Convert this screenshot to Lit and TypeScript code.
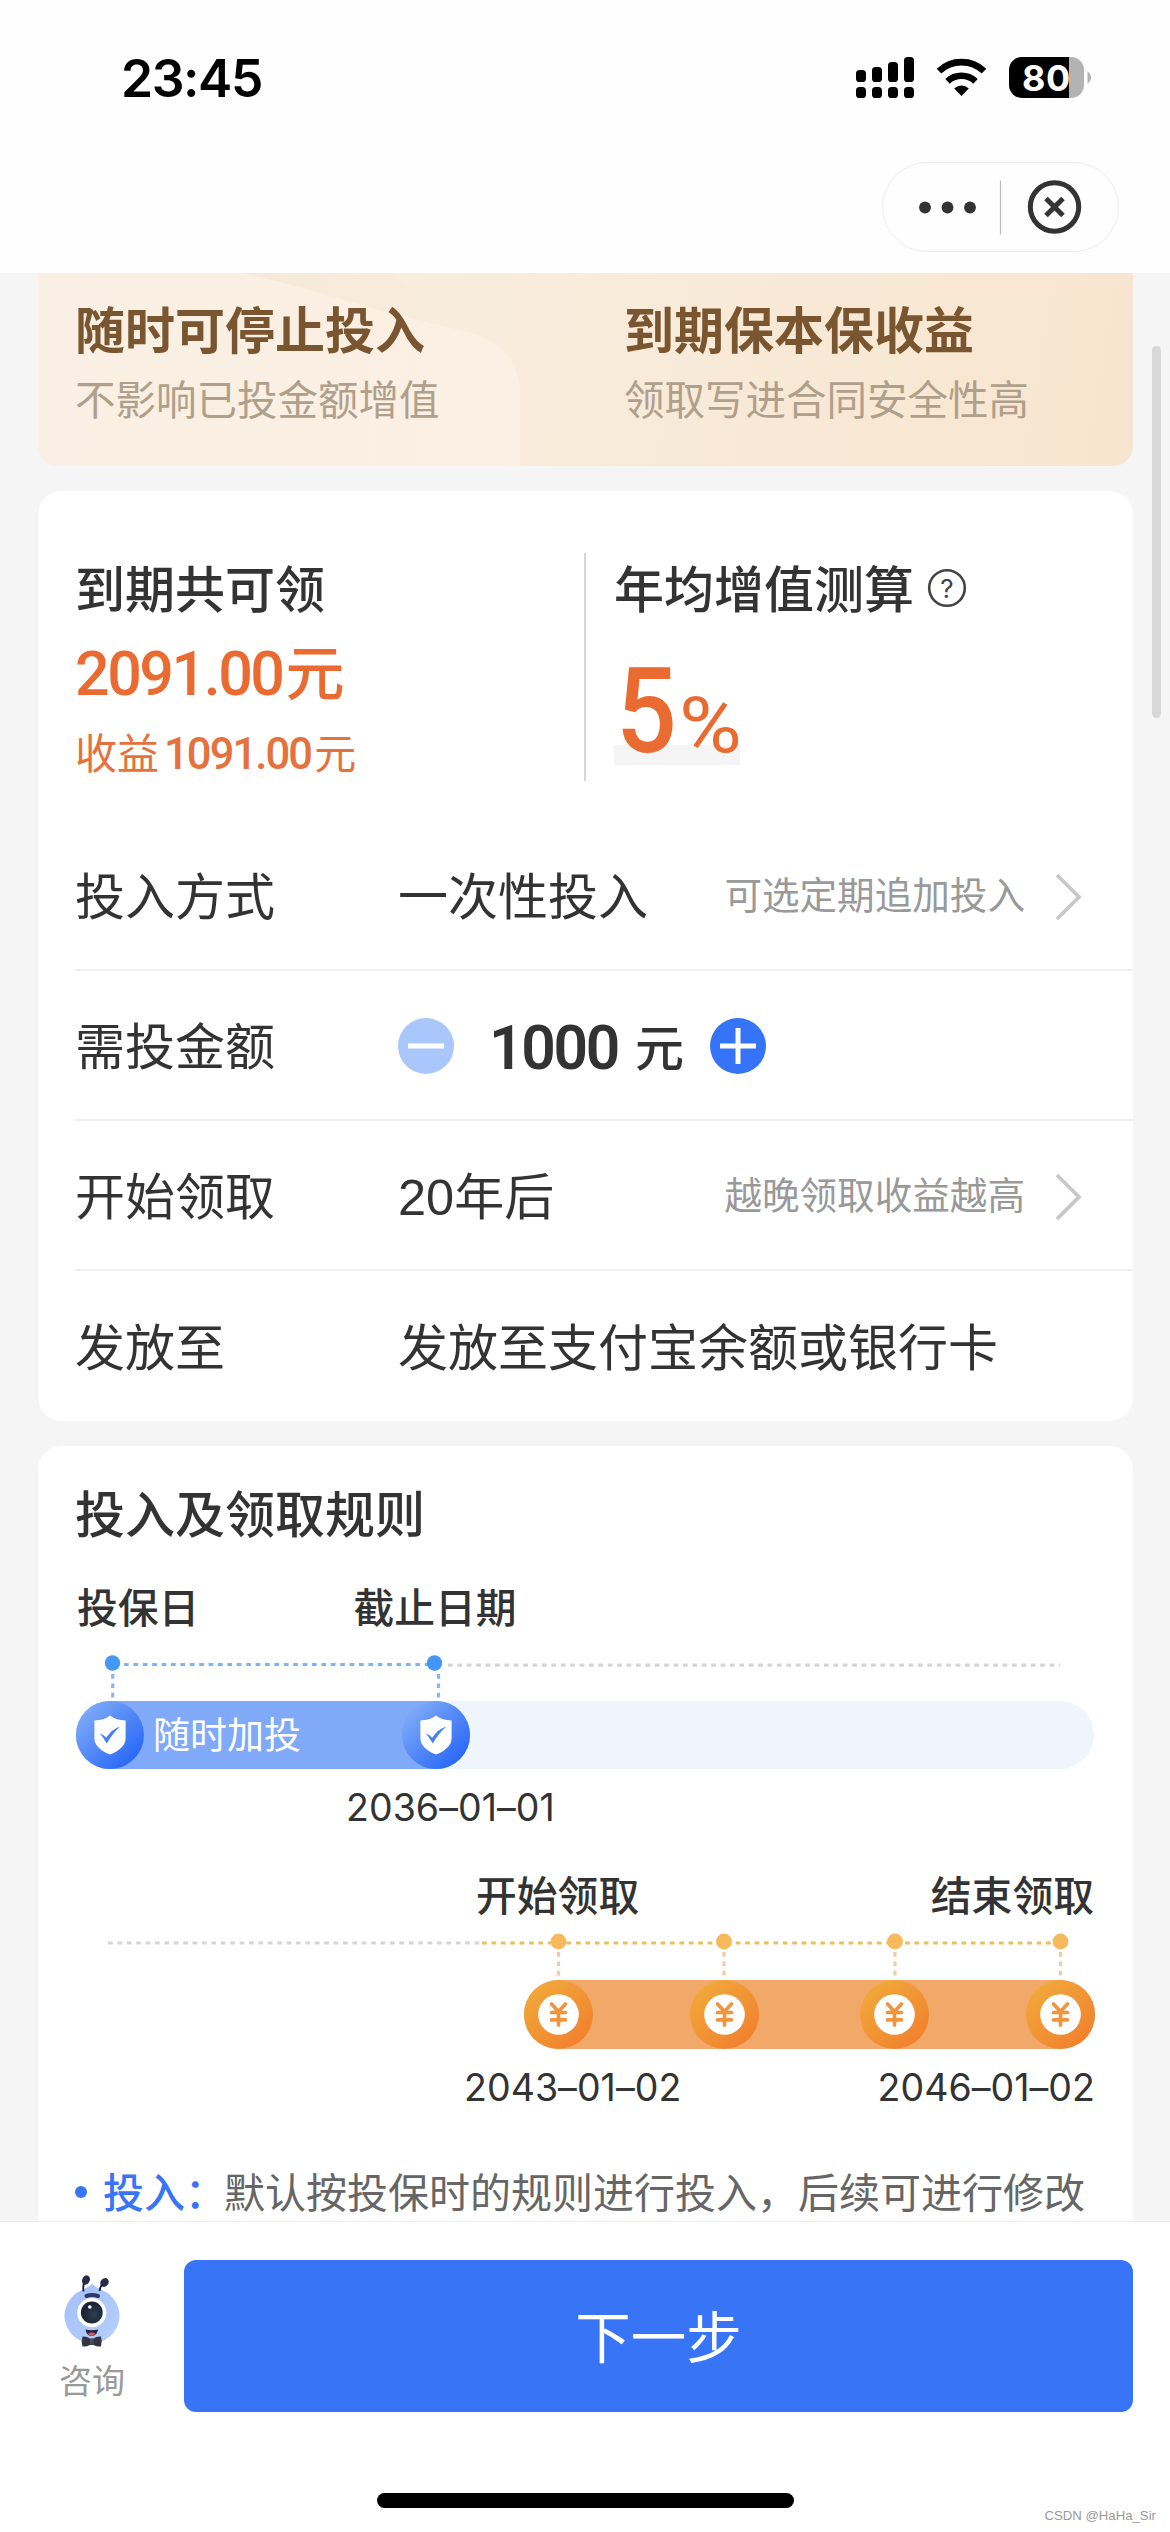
import { LitElement, html, css, svg } from "lit";
import { customElement, property } from "lit/decorators.js";

interface Row {
  label: string;
  value: string;
  lead?: string;
  hint?: string;
  stepper?: boolean;
}

const ROWS: Row[] = [
  { label: "投入方式", value: "一次性投入", hint: "可选定期追加投入" },
  { label: "需投金额", value: "1000", stepper: true },
  { label: "开始领取", lead: "20", value: "年后", hint: "越晚领取收益越高" },
  { label: "发放至", value: "发放至支付宝余额或银行卡" },
];

@customElement("status-bar")
class StatusBar extends LitElement {
  static styles = css`
    :host { display: flex; height: 156px; align-items: center; justify-content: space-between; padding: 0 77px 0 121px; box-sizing: border-box; }
    .time { font: 600 51.5px/60px Inter, sans-serif; letter-spacing: -1.4px; color: #000; }
    .icons { display: block; }
    .pct { font: 700 36px Inter, sans-serif; letter-spacing: 0.5px; }
  `;
  render() {
    const xs = [0, 16, 32, 48];
    const tops = [13, 10, 5, 0];
    return html`
      <span class="time">23:45</span>
      <svg class="icons" width="237" height="42" viewBox="0 0 237 42">
        ${xs.map((x, i) => svg`
          <rect x=${x} y=${tops[i]} width="10" height=${25 - tops[i]} rx="3.6"/>
          <rect x=${x} y="30" width="10" height="11" rx="3.6"/>`)}
        <g fill="none" stroke="#000" stroke-width="6.6">
          <path d="M83 14.200a32.500 32.500 0 0 1 45 0"/>
          <path d="M91.500 24.300a20.500 20.500 0 0 1 28 0"/>
        </g>
        <path d="M105.500 39l-7.300-7.600a10.600 10.600 0 0 1 14.600 0z"/>
        <path d="M166 0h47v41h-47a13 13 0 0 1-13-13V13a13 13 0 0 1 13-13z"/>
        <path d="M213 0h2a13 13 0 0 1 13 13v15a13 13 0 0 1-13 13h-2z" fill="#b3b3b3"/>
        <path d="M231.500 14.500q3.500 2.500 3.500 6t-3.500 6z" fill="#b3b3b3"/>
        <text class="pct" x="166" y="33.500" fill="#fff">80</text>
      </svg>`;
  }
}

@customElement("mini-capsule")
class MiniCapsule extends LitElement {
  static styles = css`
    :host { display: flex; justify-content: flex-end; padding: 6px 51px 0 0; }
    .pill { display: flex; align-items: center; width: 237px; height: 90px; box-sizing: border-box; border: 1.5px solid #ededed; border-radius: 45px; }
    .icon { display: block; }
  `;
  render() {
    return html`<div class="pill">
      <svg class="icon" width="233" height="87" viewBox="0 0 233 87">
        <g fill="#333"><circle cx="42" cy="43.500" r="5.900"/><circle cx="64.500" cy="43.500" r="5.900"/><circle cx="87" cy="43.500" r="5.900"/></g>
        <path d="M117.500 16.500v54" stroke="#bbb" stroke-width="1.200"/>
        <circle cx="171.500" cy="43" r="24.200" fill="none" stroke="#333" stroke-width="5"/>
        <path d="M163 34.500l17 17M180 34.500l-17 17" stroke="#333" stroke-width="5"/>
      </svg>
    </div>`;
  }
}

@customElement("promo-banner")
class PromoBanner extends LitElement {
  static styles = css`
    :host { display: flex; position: relative; height: 193px; overflow: hidden; border-radius: 0 0 20px 20px; padding: 24px 0 0 37px; box-sizing: border-box;
      background: linear-gradient(100deg, #f9efe3 0%, #f8ecdc 42%, #f8e9d6 70%, #f7e5cf 100%); }
    .shape { position: absolute; left: 0; top: 0; }
    .col { position: relative; flex: 0 0 549px; }
    .title { font: 700 50px/60px "Noto Sans CJK SC", sans-serif; color: #7a5630; white-space: nowrap; }
    .sub { margin-top: 11px; font: 400 40.5px/60px "Noto Sans CJK SC", sans-serif; color: #b09f8b; white-space: nowrap; }
  `;
  render() {
    return html`
      <svg class="shape" width="1095" height="193" viewBox="0 0 1095 193">
        <defs>
          <linearGradient id="glow" x1="0" y1="0" x2="1" y2="0">
            <stop offset="0" stop-color="#fbf1e6" stop-opacity=".2"/>
            <stop offset="1" stop-color="#fcf1e5" stop-opacity=".85"/>
          </linearGradient>
          <linearGradient id="shade" x1="0" y1="0" x2="1" y2="0">
            <stop offset="0" stop-color="#f5e6d3" stop-opacity=".6"/>
            <stop offset="1" stop-color="#f5e6d3" stop-opacity=".1"/>
          </linearGradient>
        </defs>
        <path d="M205 0Q280 18 330 34L400 52L355 0Z" fill="url(#shade)"/>
        <path d="M205 0Q280 18 330 34L440 62Q482 78 482 122V193H0V0Z" fill="url(#glow)"/>
      </svg>
      <div class="col"><div class="title">随时可停止投入</div><div class="sub">不影响已投金额增值</div></div>
      <div class="col"><div class="title">到期保本保收益</div><div class="sub">领取写进合同安全性高</div></div>`;
  }
}

@customElement("plan-card")
class PlanCard extends LitElement {
  static styles = css`
    :host { display: block; height: 930px; margin-top: 25px; box-sizing: border-box; padding-left: 37px; border-radius: 24px; background: #fff; color: #333; font-family: "Noto Sans CJK SC", sans-serif; white-space: nowrap; }
    .summary { display: flex; height: 330px; }
    .left { width: 509px; padding-top: 65px; box-sizing: border-box; }
    .rule { width: 2px; height: 228px; margin-top: 62px; background: #d6d6d6; }
    .right { padding: 65px 0 0 28px; }
    .title { display: flex; align-items: center; font-size: 50px; font-weight: 500; line-height: 60px; }
    .help { margin: 4px 0 0 13px; }
    .mark { font: 400 26px Inter, sans-serif; }
    .total { margin-top: 19px; font-size: 59px; font-weight: 500; line-height: 70px; color: #ea6b31; }
    .total .num { font: 500 61px/60px Roboto, sans-serif; letter-spacing: -2.500px; margin-right: 3px; }
    .gain { margin-top: 16px; font-size: 42px; line-height: 60px; color: #e5713c; }
    .gain .num { font: 500 43.500px/50px Roboto, sans-serif; letter-spacing: -1.900px; margin: 0 3px 0 5px; }
    .rate { display: flex; align-items: baseline; width: 126px; height: 120px; margin-top: 29px; color: #ea6b31; background: linear-gradient(#fff 100px, #f5f5f5 100px); }
    .five { display: block; width: 63px; margin: -2px 0 0 2px; font: 500 119px/137px Roboto, sans-serif; transform: scaleX(0.9); transform-origin: left; }
    .per { display: block; font: 400 78px/80px Roboto, sans-serif; transform: scaleX(1.1); transform-origin: left; }
    .row { display: flex; align-items: center; height: 150px; box-sizing: border-box; padding: 0 50px 4px 0; border-bottom: 2px solid #eee; font-size: 50px; line-height: 60px; }
    .row:last-child { border-bottom: 0; }
    .label { width: 323px; }
    .lead { font: 400 50.500px/50px "Liberation Sans", sans-serif; }
    .hint { margin-left: auto; font-size: 37.600px; color: #999; }
    .chev { margin: 8px 0 0 30px; }
    .stepper { display: flex; align-items: center; margin-top: 5px; }
    .btn { display: block; }
    .amount { display: flex; align-items: baseline; width: 256px; box-sizing: border-box; padding-left: 35px; font-size: 49px; font-weight: 500; }
    .amount .num { position: relative; top: 3px; width: 146px; font: 600 60.500px/60px Roboto, sans-serif; letter-spacing: -2.300px; }
  `;
  private value(r: Row) {
    if (!r.stepper) return html`<span>${r.lead ? html`<span class="lead">${r.lead}</span>` : ""}${r.value}</span>`;
    return html`<span class="stepper">
      <svg class="btn" width="56" height="56" viewBox="0 0 56 56"><circle cx="28" cy="28" r="28" fill="#a9c7fb"/><path d="M10 28h36" stroke="#fff" stroke-width="5"/></svg>
      <span class="amount"><span class="num">${r.value}</span>元</span>
      <svg class="btn" width="56" height="56" viewBox="0 0 56 56"><circle cx="28" cy="28" r="28" fill="#3574f6"/><path d="M10 28h36M28 10v36" stroke="#fff" stroke-width="5"/></svg>
    </span>`;
  }
  render() {
    return html`
      <div class="summary">
        <div class="left">
          <div class="title">到期共可领</div>
          <div class="total"><span class="num">2091.00</span>元</div>
          <div class="gain">收益<span class="num">1091.00</span>元</div>
        </div>
        <div class="rule"></div>
        <div class="right">
          <div class="title">年均增值测算
            <svg class="help" width="40" height="40" viewBox="0 0 40 40"><circle cx="20" cy="20" r="17.800" fill="none" stroke="#444" stroke-width="2.600"/><text class="mark" x="20" y="29.500" text-anchor="middle" fill="#444">?</text></svg>
          </div>
          <div class="rate"><span class="five">5</span><span class="per">%</span></div>
        </div>
      </div>
      ${ROWS.map((r) => html`<div class="row">
        <span class="label">${r.label}</span>${this.value(r)}
        ${r.hint ? html`<span class="hint">${r.hint}</span>
          <svg class="chev" width="28" height="50" viewBox="0 0 28 50"><path d="M2 3l22 22L2 47" fill="none" stroke="#c8c8c8" stroke-width="3.800"/></svg>` : ""}
      </div>`)}`;
  }
}

@customElement("timeline-knob")
class TimelineKnob extends LitElement {
  @property() kind = "shield";
  static styles = css`
    :host { display: block; line-height: 0; }
  `;
  render() {
    if (this.kind === "shield") {
      return html`<svg width="68" height="68" viewBox="0 0 68 68">
        <defs><linearGradient id="b" x1=".1" y1=".15" x2=".85" y2=".9"><stop offset="0" stop-color="#7eaaf8"/><stop offset="1" stop-color="#2767f6"/></linearGradient></defs>
        <circle cx="34" cy="34" r="34" fill="url(#b)"/>
        <path d="M34 14.500q6 4.800 15.600 5v17.500q0 10.500-15.600 16.500-15.600-6-15.600-16.500v-17.500q9.600-.2 15.600-5z" fill="#fff"/>
        <path d="M23.800 32.500q4 1.600 6.500 4.300 5.500-8.800 14-11.300-7.500 6.500-13.500 17-3-5.500-7-10z" fill="#4680f7"/>
      </svg>`;
    }
    return html`<svg width="69" height="69" viewBox="0 0 69 69">
      <defs><linearGradient id="o" x1=".15" y1=".1" x2=".85" y2=".9"><stop offset="0" stop-color="#f1a83a"/><stop offset="1" stop-color="#f1812f"/></linearGradient></defs>
      <circle cx="34.500" cy="34.500" r="34.500" fill="url(#o)"/>
      <circle cx="34.500" cy="34.500" r="20.300" fill="#fff"/>
      <path d="M27.500 24l7 7.500 7-7.500M34.500 32v13M27.500 32.500h14M27.500 39.800h14" fill="none" stroke="#f0953c" stroke-width="3.700" stroke-linecap="round" stroke-linejoin="round"/>
    </svg>`;
  }
}

@customElement("rules-card")
class RulesCard extends LitElement {
  static styles = css`
    :host { display: block; height: 820px; margin-top: 25px; box-sizing: border-box; padding: 35px 38px 0 38px; border-radius: 24px; background: #fff; color: #333; font-family: "Noto Sans CJK SC", sans-serif; white-space: nowrap; }
    .title { margin-left: -1px; font-size: 50px; font-weight: 500; line-height: 60px; }
    .labels { display: flex; font-size: 40.800px; font-weight: 500; line-height: 50px; }
    .invest { margin-top: 40px; gap: 154px; padding-left: 1px; }
    .draw { margin-top: 36px; justify-content: space-between; padding: 0 1px 0 400px; }
    .axis { display: block; }
    .track { display: flex; height: 68px; width: 1018px; border-radius: 34px; background: #eff5fd; }
    .fill { display: flex; align-items: center; width: 394px; border-radius: 34px; background: #80a9f8; }
    .caption { flex: 1; padding-left: 9px; font-size: 37px; line-height: 60px; margin-top: -5px; color: #fff; }
    .coins { display: flex; gap: 96.500px; box-sizing: border-box; width: 571px; height: 69px; margin-left: 448px; border-radius: 35px; background: #f2a869; }
    .coins timeline-knob:nth-child(2) { margin-right: 5px; }
    .date { font: 400 37.500px/50px Inter, sans-serif; letter-spacing: 0.050px; }
    .until { margin-top: 14px; padding-left: 270px; }
    .range { display: flex; justify-content: space-between; margin-top: 14px; padding-left: 388px; }
    .note { display: flex; align-items: center; margin-top: 48px; font-size: 41px; line-height: 58px; color: #666; }
    .bullet { width: 12px; height: 12px; margin: 4px 16px 0 -1px; border-radius: 50%; background: #3875f6; }
    .key { width: 121px; color: #3875f6; font-weight: 500; }
  `;
  render() {
    const coins = [482.5, 648, 819, 984.5];
    return html`
      <div class="title">投入及领取规则</div>
      <div class="labels invest"><span>投保日</span><span>截止日期</span></div>
      <svg class="axis" width="1018" height="70" viewBox="0 0 1018 70">
        <g fill="none" stroke-width="3.200" stroke-dasharray="4.700 4.700">
          <path d="M48 33.500h310" stroke="#79b6f4"/>
          <path d="M372 34.200h612" stroke="#d5d5d5"/>
          <path d="M36.700 43v24M362.500 43v24" stroke="#8fb4ec"/>
        </g>
        <circle cx="36.500" cy="32" r="7.700" fill="#4497f7"/><circle cx="358.500" cy="32" r="7.700" fill="#4497f7"/>
      </svg>
      <div class="track">
        <div class="fill">
          <timeline-knob kind="shield"></timeline-knob>
          <span class="caption">随时加投</span>
          <timeline-knob kind="shield"></timeline-knob>
        </div>
      </div>
      <div class="date until">2036–01–01</div>
      <div class="labels draw"><span>开始领取</span><span>结束领取</span></div>
      <svg class="axis" width="1018" height="61" viewBox="0 0 1018 61">
        <g fill="none" stroke-width="3.200" stroke-dasharray="4.700 4.700">
          <path d="M32 24h374" stroke="#d5d5d5"/>
          <path d="M406 24h574" stroke="#ebc05c"/>
          ${coins.map((x) => svg`<path d="M${x} 33v24" stroke="#f2c9a0"/>`)}
        </g>
        ${coins.map((x) => svg`<circle cx=${x} cy="22.500" r="7.900" fill="#f7b95c"/>`)}
      </svg>
      <div class="coins">${coins.map(() => html`<timeline-knob kind="coin"></timeline-knob>`)}</div>
      <div class="date range"><span>2043–01–02</span><span>2046–01–02</span></div>
      <div class="note"><i class="bullet"></i><span class="key">投入：</span><span>默认按投保时的规则进行投入，后续可进行修改</span></div>`;
  }
}

@customElement("action-bar")
class ActionBar extends LitElement {
  static styles = css`
    :host { display: flex; flex-direction: column; height: 311px; box-sizing: border-box; border-top: 1px solid #ececec; background: #fff; font-family: "Noto Sans CJK SC", sans-serif; }
    .line { display: flex; height: 152px; margin-top: 38px; padding-right: 37px; }
    .ask { width: 184px; display: flex; flex-direction: column; align-items: center; box-sizing: border-box; padding-top: 14px; }
    .bot { display: block; }
    .cap { margin-top: 4px; font-size: 33px; line-height: 50px; color: #999; }
    .next { flex: 1; display: flex; align-items: center; justify-content: center; padding-bottom: 4px; box-sizing: border-box; border-radius: 12px; background: #3875f6; color: #fff; font-size: 55.500px; line-height: 70px; }
    .home { width: 417px; height: 15px; margin: 81px auto 0; border-radius: 8px; background: #000; }
    .credit { align-self: flex-end; margin: 0 14px 0 0; font: 13.200px/16px "Liberation Sans", sans-serif; color: #999; white-space: nowrap; }
  `;
  render() {
    return html`
      <div class="line">
        <div class="ask">
          <svg class="bot" width="60" height="76" viewBox="0 0 60 76">
            <defs>
              <linearGradient id="body" x1="0" y1="0" x2="1" y2="1"><stop offset="0" stop-color="#a4c0f8"/><stop offset="1" stop-color="#b5cffc"/></linearGradient>
              <radialGradient id="eye" cx=".6" cy=".6" r=".6"><stop offset="0" stop-color="#2d3d50"/><stop offset="1" stop-color="#17202f"/></radialGradient>
            </defs>
            <path d="M30 10q5 4 11 6.500a27.500 27.500 0 1 1-22 0q6-2.500 11-6.500z" fill="url(#body)"/>
            <path d="M21.500 17.500Q20.500 10 23.500 5M37.500 17Q38.500 11 42 8" fill="none" stroke="#1c2138" stroke-width="1.900"/>
            <ellipse cx="24" cy="6" rx="3.800" ry="4.800" transform="rotate(25 24 6)" fill="#232a4a"/>
            <ellipse cx="42.500" cy="8.500" rx="3.900" ry="4.700" transform="rotate(40 42.500 8.500)" fill="#232a4a"/>
            <path d="M24.500 22q5.500-2 11.500 0" fill="none" stroke="#2c3a66" stroke-width="4" stroke-linecap="round"/>
            <circle cx="29.800" cy="38.700" r="14.600" fill="#fff"/>
            <circle cx="29.800" cy="38.500" r="10.900" fill="url(#eye)"/>
            <circle cx="27.800" cy="33" r="1.800" fill="#fff"/>
            <path d="M23.500 55.500q6 1.500 12.500 0-1 6.500-6.300 6.500t-6.200-6.500z" fill="#2a2340"/>
            <path d="M26 59.300q4-1.500 7.500 0-1.500 2.700-3.800 2.700t-3.700-2.700z" fill="#e0525c"/>
            <path d="M20.500 62.500q4-.5 7.500 2h3.500q3.500-2.500 7.500-2 1.500 4.500 0 10-4 .5-7.500-1.500h-3.500q-3.500 2-7.500 1.500-1.500-5 0-10z" fill="#34363f"/>
            <path d="M28 65h3.500v5.500h-3.500z" fill="#4b4d57"/>
          </svg>
          <span class="cap">咨询</span>
        </div>
        <div class="next">下一步</div>
      </div>
      <div class="home"></div>
      <span class="credit">CSDN @HaHa_Sir</span>`;
  }
}

@customElement("app-root")
class AppRoot extends LitElement {
  static styles = css`
    :host { display: block; width: 1170px; height: 2532px; overflow: hidden; background: #f5f5f5; }
    .head { height: 273px; background: #fefefe; }
    .body { position: relative; height: 1948px; overflow: hidden; padding: 0 37px 0 38px; box-sizing: border-box; }
    .thumb { position: absolute; right: 9px; top: 73px; width: 9px; height: 372px; border-radius: 5px; background: #d8d8d8; }
  `;
  render() {
    return html`
      <div class="head"><status-bar></status-bar><mini-capsule></mini-capsule></div>
      <div class="body">
        <promo-banner></promo-banner>
        <plan-card></plan-card>
        <rules-card></rules-card>
        <div class="thumb"></div>
      </div>
      <action-bar></action-bar>`;
  }
}
